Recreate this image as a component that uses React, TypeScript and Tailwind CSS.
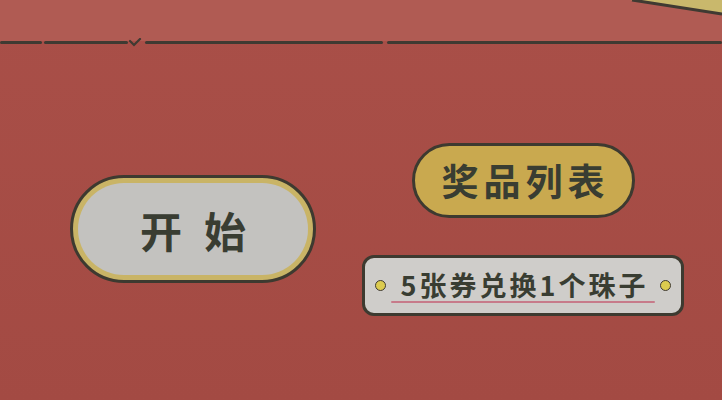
const cjk = { fontFamily: '"Noto Sans CJK SC", "Noto Sans", sans-serif' };

// dashes of the ink line under the header strip: [width, gap after]
const dashes: [number, number][] = [
  [42, 2],
  [84, 17],
  [239, 4],
  [336, 0],
];

function InkLine() {
  return (
    <div className="relative flex h-[3px] items-center">
      {dashes.map(([w, gap], i) => (
        <div
          key={i}
          className="h-[3px] rounded-full bg-[#3f3a32]"
          style={{ width: w, marginRight: gap }}
        />
      ))}
      <svg className="absolute left-[128px] top-[-3px]" width="14" height="10" viewBox="0 0 14 10">
        <path d="M2 3 L6 7 L12 1" fill="none" stroke="#3f3a32" strokeWidth="2.2" strokeLinecap="round" />
      </svg>
    </div>
  );
}

function Dot() {
  return <div className="h-[11px] w-[11px] shrink-0 rounded-full border-[1.5px] border-[#3f3a32] bg-[#dccb4f]" />;
}

export default function App() {
  return (
    <div className="relative h-[400px] w-[722px] overflow-hidden bg-gradient-to-b from-[#a94f48] to-[#a34a43]" style={cjk}>
      {/* roof corner poking in at the top right */}
      <svg className="absolute right-0 top-0" width="92" height="18" viewBox="0 0 92 18">
        <path d="M0 0 L92 0 L92 14 Z" fill="#c9b86c" />
        <path d="M2 0 L92 14" stroke="#3f3a32" strokeWidth="3" />
      </svg>

      <div className="h-[41px] bg-[#b05b53]" />
      <InkLine />

      <div className="flex pl-[70px]">
        <button className="mt-[131px] flex h-[108px] w-[246px] items-center justify-center rounded-full border-[3px] border-[#3d3a30] bg-[#c9b466] p-[5px]">
          <span className="flex h-full w-full items-center justify-center rounded-full bg-[#c3c2bf] pl-[22px] text-[42px] font-semibold tracking-[22px] text-[#393d32]">
            开始
          </span>
        </button>

        <div className="ml-[46px] flex w-[322px] flex-col items-center">
          <button className="mt-[99px] flex h-[75px] w-[223px] items-center justify-center rounded-full border-[3px] border-[#3d3a30] bg-[#c9a94f] pl-[5px] text-[37px] font-bold tracking-[5px] text-[#393d32]">
            奖品列表
          </button>

          <div className="mt-[37px] flex h-[61px] w-[322px] items-center gap-[5px] rounded-[12px] border-[3px] border-[#3d3a30] bg-[#cfcdca] px-[10px]">
            <Dot />
            <div className="flex flex-1 flex-col items-center">
              <span className="pl-[3px] text-[27px] font-semibold leading-[32px] tracking-[3px] text-[#393d32]">
                5张券兑换1个珠子
              </span>
              <div className="h-[2px] w-full rounded-full bg-[#c77b8a]" />
            </div>
            <Dot />
          </div>
        </div>
      </div>
    </div>
  );
}
